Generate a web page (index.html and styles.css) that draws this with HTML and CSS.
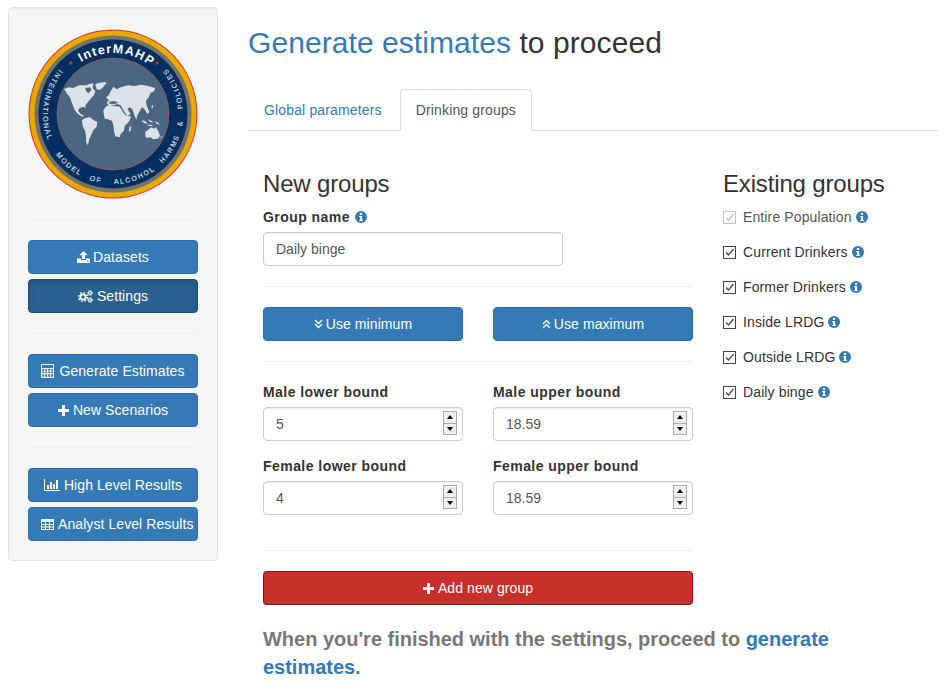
FILE: index.html
```html
<!DOCTYPE html>
<html lang="en">
<head>
<meta charset="utf-8">
<title>InterMAHP</title>
<link rel="stylesheet" href="styles.css">
</head>
<body>
<svg class="defs" width="0" height="0" aria-hidden="true">
  <defs>
    <symbol id="i-info" viewBox="0 0 12 12">
      <circle cx="6" cy="6" r="6" fill="#337ab7"/>
      <rect x="4.9" y="1.9" width="2.2" height="2" fill="#fff"/>
      <path d="M4.2 5h2.9v3.9h0.8v1.2H4.2V8.9h0.8V6.2H4.2z" fill="#fff"/>
    </symbol>
    <symbol id="i-plus" viewBox="0 0 11 11">
      <path d="M4 0h3v4h4v3H7v4H4V7H0V4h4z" fill="#fff"/>
    </symbol>
  </defs>
</svg>
<div class="page">
  <aside class="well">
    <div class="logo">
      <svg width="170" height="170" viewBox="0 0 170 170" role="img" aria-label="InterMAHP logo">
        <defs>
          <path id="arc-top" d="M24 85a61 61 0 0 1 122 0"/>
          <path id="arc-bottom" d="M31.400 40A70 70 0 1 0 138.600 40"/>
        </defs>
        <circle cx="85" cy="85" r="84.500" fill="#dc2f35"/>
        <circle cx="85" cy="85" r="83.500" fill="#eba900"/>
        <circle cx="85" cy="85" r="78.500" fill="#76736d"/>
        <circle cx="85" cy="85" r="74.500" fill="#012f61"/>
        <circle cx="85" cy="85" r="56" fill="#4b6680" stroke="#a5525a" stroke-width="0.800"/>
        <text class="logo-title"><textPath href="#arc-top" startOffset="52%" text-anchor="middle">InterMAHP</textPath></text>
        <text class="logo-sub"><textPath href="#arc-bottom" startOffset="38.500" text-anchor="middle">INTERNATIONAL</textPath></text>
        <text class="logo-sub"><textPath href="#arc-bottom" startOffset="108.400" text-anchor="middle">MODEL</textPath></text>
        <text class="logo-sub"><textPath href="#arc-bottom" startOffset="141" text-anchor="middle">OF</textPath></text>
        <text class="logo-sub"><textPath href="#arc-bottom" startOffset="182" text-anchor="middle">ALCOHOL</textPath></text>
        <text class="logo-sub"><textPath href="#arc-bottom" startOffset="230.300" text-anchor="middle">HARMS</textPath></text>
        <text class="logo-sub"><textPath href="#arc-bottom" startOffset="259" text-anchor="middle">&amp;</textPath></text>
        <text class="logo-sub"><textPath href="#arc-bottom" startOffset="296.300" text-anchor="middle">POLICIES</textPath></text>
        <circle cx="42.700" cy="34" r="1.700" fill="#e0232f"/>
        <circle cx="129" cy="34" r="1.700" fill="#e0232f"/>
        <g transform="translate(-20 -21) scale(0.3333)" fill="#dde2e9">
          <path d="M168 243L182 238L195 240L215 232L235 232L246 227L256 226L254 240L262 250L258 262L248 272L240 282L232 292L234 302L228 296L215 300L210 308L218 318L228 324L222 326L210 318L200 306L192 286L186 268L178 258Z"/>
          <path d="M262 228L275 224L292 222L295 226L285 238L275 246L266 244Z"/>
          <path d="M222 336L232 330L246 328L256 336L268 342L266 356L256 366L250 380L244 392L240 412L235 404L234 386L232 370L224 354Z"/>
          <path d="M294 268L302 262L308 250L316 236L326 244L338 238L360 232L380 234L400 230L420 234L442 240L438 250L428 254L422 268L414 278L416 292L424 312L418 318L410 304L402 298L396 308L388 322L385 335L380 325L374 305L366 298L358 302L368 318L358 324L346 306L338 292L328 288L316 292L300 290L296 282L304 278Z"/>
          <path d="M286 308L292 298L303 290L318 294L335 296L345 312L353 322L370 326L362 342L350 354L348 368L338 378L335 388L322 385L318 370L316 352L312 338L300 334L290 332Z"/>
          <path d="M365 358L370 352L368 368L362 372Z"/>
          <path d="M412 372L420 365L430 358L438 362L444 358L452 372L456 384L448 392L436 394L428 388L416 390L412 384Z"/>
          <path d="M402 336L412 340L418 346L412 347L404 342ZM420 334L430 338L436 344L426 342ZM416 350L430 350L436 353L424 354ZM440 340L450 344L456 350L446 348ZM430 298L434 290L436 292L433 302ZM450 392L464 384L462 388Z"/>
          <path d="M232 240L246 238L250 246L242 256L234 250Z" fill="#4b6680"/>
          <path d="M302 282L318 279L332 284L322 287L306 288Z" fill="#4b6680"/>
        </g>
      </svg>
    </div>
    <hr class="rule">
    <div class="btn-group">
      <button class="btn primary"><svg class="ic ic-tight" width="13" height="12" viewBox="0 0 13 12"><path d="M6.500 0l4.200 4.200H8V8H5V4.200H2.300zM0 7.500h4V9h5V7.500h4V12H0z" fill="#fff"/><rect x="10" y="9.600" width="1" height="1" fill="#337ab7"/><rect x="11.600" y="9.600" width="1" height="1" fill="#337ab7"/></svg>Datasets</button>
      <button class="btn primary active"><svg class="ic" width="15" height="13" viewBox="0 0 15 13"><g fill="none" stroke="#fff"><circle cx="5" cy="7" r="2.600" stroke-width="1.900"/><circle cx="5" cy="7" r="4.400" stroke-width="1.400" stroke-dasharray="1.800 1.650"/><circle cx="12" cy="3" r="1.400" stroke-width="1.100"/><circle cx="12" cy="3" r="2.500" stroke-width="0.900" stroke-dasharray="1.200 1.200"/><circle cx="12" cy="10" r="1.400" stroke-width="1.100"/><circle cx="12" cy="10" r="2.500" stroke-width="0.900" stroke-dasharray="1.200 1.200"/></g></svg>Settings</button>
    </div>
    <hr class="rule">
    <div class="btn-group">
      <button class="btn primary"><svg class="ic ic-wide" width="13" height="14" viewBox="0 0 13 14"><path fill-rule="evenodd" d="M0 0h13v14H0zM1 1v3h11V1zM1.200 5v1.700h2V5zM4.200 5v1.700h2V5zM7.200 5v1.700h2V5zM10 5v1.700h2V5zM1.200 7.600v1.700h2V7.600zM4.200 7.600v1.700h2V7.600zM7.200 7.600v1.700h2V7.600zM10 7.600v1.700h2V7.600zM1.200 10.200V12.800h2V10.200zM4.200 10.200V12.800h2V10.200zM7.200 10.200V12.800h2V10.200zM10 10.200V12.800h2V10.200z" fill="#fff"/></svg>Generate Estimates</button>
      <button class="btn primary"><svg class="ic" width="11" height="11"><use href="#i-plus"/></svg>New Scenarios</button>
    </div>
    <hr class="rule">
    <div class="btn-group">
      <button class="btn primary"><svg class="ic" width="16" height="12" viewBox="0 0 16 12"><path d="M0 0h1v11h15v1H0z" fill="#fff"/><path d="M3 6h2v4H3zM6 3h2v7H6zM9 5h2v5H9zM12 1h2v9h-2z" fill="#fff"/></svg>High Level Results</button>
      <button class="btn primary"><svg class="ic" width="13" height="11" viewBox="0 0 13 11"><path fill-rule="evenodd" d="M0 0h13v11H0zM1 3v2h3V3zM5 3v2h3V3zM9 3v2h3V3zM1 6v1.500h3V6zM5 6v1.500h3V6zM9 6v1.500h3V6zM1 8.500v1.500h3V8.500zM5 8.500v1.500h3V8.500zM9 8.500v1.500h3V8.500z" fill="#fff"/></svg>Analyst Level Results</button>
    </div>
  </aside>

  <main class="main">
    <h2 class="title"><a href="#estimates">Generate estimates</a> to proceed</h2>
    <ul class="tabs">
      <li class="tab"><a href="#global">Global parameters</a></li>
      <li class="tab current"><a href="#groups">Drinking groups</a></li>
    </ul>
    <div class="panel">
      <section class="form-col">
        <h3 class="heading">New groups</h3>
        <label class="label" for="gname">Group name <svg class="info" width="12" height="12"><use href="#i-info"/></svg></label>
        <input class="input name-input" id="gname" type="text" value="Daily binge">
        <hr class="rule">
        <div class="two-col">
          <button class="btn primary"><svg class="ic ic-tight" width="9" height="10" viewBox="0 0 9 10"><path d="M1 1l3.500 3.500L8 1M1 5l3.500 3.500L8 5" fill="none" stroke="#fff" stroke-width="1.300"/></svg>Use minimum</button>
          <button class="btn primary"><svg class="ic ic-tight" width="9" height="10" viewBox="0 0 9 10"><path d="M1 9l3.500-3.500L8 9M1 5l3.500-3.500L8 5" fill="none" stroke="#fff" stroke-width="1.300"/></svg>Use maximum</button>
        </div>
        <hr class="rule">
        <div class="two-col fields">
          <div class="field">
            <label class="label">Male lower bound</label>
            <div class="num"><input class="input" type="text" value="5"><span class="spin"><i class="up"></i><i class="down"></i></span></div>
          </div>
          <div class="field">
            <label class="label">Male upper bound</label>
            <div class="num"><input class="input" type="text" value="18.59"><span class="spin"><i class="up"></i><i class="down"></i></span></div>
          </div>
          <div class="field">
            <label class="label">Female lower bound</label>
            <div class="num"><input class="input" type="text" value="4"><span class="spin"><i class="up"></i><i class="down"></i></span></div>
          </div>
          <div class="field">
            <label class="label">Female upper bound</label>
            <div class="num"><input class="input" type="text" value="18.59"><span class="spin"><i class="up"></i><i class="down"></i></span></div>
          </div>
        </div>
        <hr class="rule rule-low">
        <button class="btn danger"><svg class="ic" width="11" height="11"><use href="#i-plus"/></svg>Add new group</button>
      </section>
      <section class="list-col">
        <h3 class="heading">Existing groups</h3>
        <ul class="checks">
          <li class="check disabled"><svg class="box" width="13" height="13" viewBox="0 0 13 13"><rect x="0.500" y="0.500" width="12" height="12" fill="#fff" stroke="#c4c4c4"/><path d="M3 6.500l2.500 2.500L10.500 3" fill="none" stroke="#c4c4c4" stroke-width="1.200"/></svg><span>Entire Population</span><svg class="info" width="12" height="12"><use href="#i-info"/></svg></li>
          <li class="check"><svg class="box" width="13" height="13" viewBox="0 0 13 13"><rect x="0.500" y="0.500" width="12" height="12" fill="#fff" stroke="#444"/><path d="M3 6.500l2.500 2.500L10.500 3" fill="none" stroke="#444" stroke-width="1.200"/></svg><span>Current Drinkers</span><svg class="info" width="12" height="12"><use href="#i-info"/></svg></li>
          <li class="check"><svg class="box" width="13" height="13" viewBox="0 0 13 13"><rect x="0.500" y="0.500" width="12" height="12" fill="#fff" stroke="#444"/><path d="M3 6.500l2.500 2.500L10.500 3" fill="none" stroke="#444" stroke-width="1.200"/></svg><span>Former Drinkers</span><svg class="info" width="12" height="12"><use href="#i-info"/></svg></li>
          <li class="check"><svg class="box" width="13" height="13" viewBox="0 0 13 13"><rect x="0.500" y="0.500" width="12" height="12" fill="#fff" stroke="#444"/><path d="M3 6.500l2.500 2.500L10.500 3" fill="none" stroke="#444" stroke-width="1.200"/></svg><span>Inside LRDG</span><svg class="info" width="12" height="12"><use href="#i-info"/></svg></li>
          <li class="check"><svg class="box" width="13" height="13" viewBox="0 0 13 13"><rect x="0.500" y="0.500" width="12" height="12" fill="#fff" stroke="#444"/><path d="M3 6.500l2.500 2.500L10.500 3" fill="none" stroke="#444" stroke-width="1.200"/></svg><span>Outside LRDG</span><svg class="info" width="12" height="12"><use href="#i-info"/></svg></li>
          <li class="check"><svg class="box" width="13" height="13" viewBox="0 0 13 13"><rect x="0.500" y="0.500" width="12" height="12" fill="#fff" stroke="#444"/><path d="M3 6.500l2.500 2.500L10.500 3" fill="none" stroke="#444" stroke-width="1.200"/></svg><span>Daily binge</span><svg class="info" width="12" height="12"><use href="#i-info"/></svg></li>
        </ul>
      </section>
    </div>
    <p class="finish">When you're finished with the settings, proceed to <a href="#estimates">generate estimates.</a></p>
  </main>
</div>
</body>
</html>
```
FILE: styles.css
```css
* { box-sizing: border-box; }
html, body { margin: 0; padding: 0; background: #fff; }
body {
  font-family: "Liberation Sans", Arial, sans-serif;
  font-size: 14px;
  line-height: 20px;
  color: #333;
}
a { color: #337ab7; text-decoration: none; }
.defs { position: absolute; }
.page {
  display: flex;
  align-items: flex-start;
  gap: 30px;
  padding: 7px 6px 0 8px;
}
.well {
  flex: 0 0 210px;
  width: 210px;
  min-width: 0;
  padding: 19px;
  background: #f5f5f5;
  border: 1px solid #e3e3e3;
  border-radius: 4px;
  box-shadow: inset 0 1px 1px rgba(0,0,0,.05);
}
.logo { height: 172px; padding-top: 2px; }
.logo svg { display: block; }
.logo-title {
  font: bold 12.500px "Liberation Sans", sans-serif;
  letter-spacing: 1.200px;
  fill: #fff;
}
.logo-sub {
  font: 7px "Liberation Sans", sans-serif;
  letter-spacing: 1.600px;
  fill: #dfe4ea;
  stroke: #dfe4ea;
  stroke-width: .12px;
}
.rule {
  height: 0;
  margin: 20px 0;
  border: 0;
  border-top: 1px solid #eee;
}
.btn-group { display: flex; flex-direction: column; gap: 5px; }
.btn {
  display: flex;
  align-items: center;
  justify-content: safe center;
  width: 100%;
  height: 34px;
  padding: 6px 12px;
  font: 14px/20px "Liberation Sans", Arial, sans-serif;
  letter-spacing: .08px;
  color: #fff;
  border: 1px solid transparent;
  border-radius: 4px;
  white-space: nowrap;
}
.primary { background: #337ab7; border-color: #2e6da4; }
.primary.active {
  background: #286090;
  border-color: #204d74;
  box-shadow: inset 0 3px 5px rgba(0,0,0,.125);
}
.danger {
  background: #c9302c;
  border-color: #ac2925;
  outline: 1px dotted #222;
  outline-offset: -1px;
}
.ic { flex: none; margin-right: 4px; }
.ic-tight { margin-right: 3px; }
.ic-wide { margin-right: 5px; }

.main { flex: 1; min-width: 0; }
.title {
  margin: 19px 0 30px;
  font-size: 30px;
  font-weight: 400;
  line-height: 33px;
  letter-spacing: .07px;
}
.tabs {
  display: flex;
  gap: 2px;
  height: 42px;
  margin: 0;
  padding: 0;
  list-style: none;
  border-bottom: 1px solid #ddd;
}
.tab a {
  display: block;
  height: 42px;
  padding: 10px 15px;
  letter-spacing: .15px;
  border: 1px solid transparent;
  border-radius: 4px 4px 0 0;
}
.tab.current a {
  color: #555;
  background: #fff;
  border-color: #ddd #ddd #fff;
}
.panel {
  display: flex;
  gap: 30px;
  padding: 27px 0 0 15px;
}
.form-col { flex: 0 0 430px; }
.list-col { flex: 1; }
.heading {
  margin: 13px 0 10px;
  font-size: 24px;
  font-weight: 400;
  line-height: 26px;
  letter-spacing: -.16px;
}
.label {
  display: block;
  margin-bottom: 5px;
  font-weight: 700;
  letter-spacing: .45px;
}
.info { vertical-align: -1px; margin-left: 1px; }
.input {
  display: block;
  width: 100%;
  height: 34px;
  padding: 6px 12px;
  font: 14px/20px "Liberation Sans", Arial, sans-serif;
  color: #555;
  background: #fff;
  border: 1px solid #ccc;
  border-radius: 4px;
  box-shadow: inset 0 1px 1px rgba(0,0,0,.075);
}
.name-input { width: 300px; }
.two-col {
  display: grid;
  grid-template-columns: 200px 200px;
  column-gap: 30px;
}
.fields { row-gap: 15px; }
.num { position: relative; }
.spin {
  position: absolute;
  top: 4px;
  right: 6px;
  display: flex;
  flex-direction: column;
  width: 14px;
  height: 24px;
}
.spin i {
  position: relative;
  flex: 1;
  background: #efefef;
  border: 1px solid #a9a9a9;
}
.spin .down { margin-top: -1px; }
.spin i::after {
  content: "";
  position: absolute;
  left: 3px;
  top: 3px;
  border-left: 3px solid transparent;
  border-right: 3px solid transparent;
}
.spin .up::after { border-bottom: 4px solid #000; }
.spin .down::after { border-top: 4px solid #000; }
.rule-low { margin-top: 35px; }
.finish {
  margin: 20px 0 0;
  padding: 0 15px;
  font-size: 20px;
  line-height: 28px;
  font-weight: 700;
  letter-spacing: -.02px;
  color: #777;
}
.checks { margin: 0; padding: 0; list-style: none; }
.check {
  display: flex;
  align-items: center;
  height: 20px;
  margin-bottom: 15px;
  letter-spacing: .12px;
}
.check .box { flex: none; margin-right: 7px; }
.check .info { margin-left: 4px; }
.check.disabled span { color: #555; }
```
